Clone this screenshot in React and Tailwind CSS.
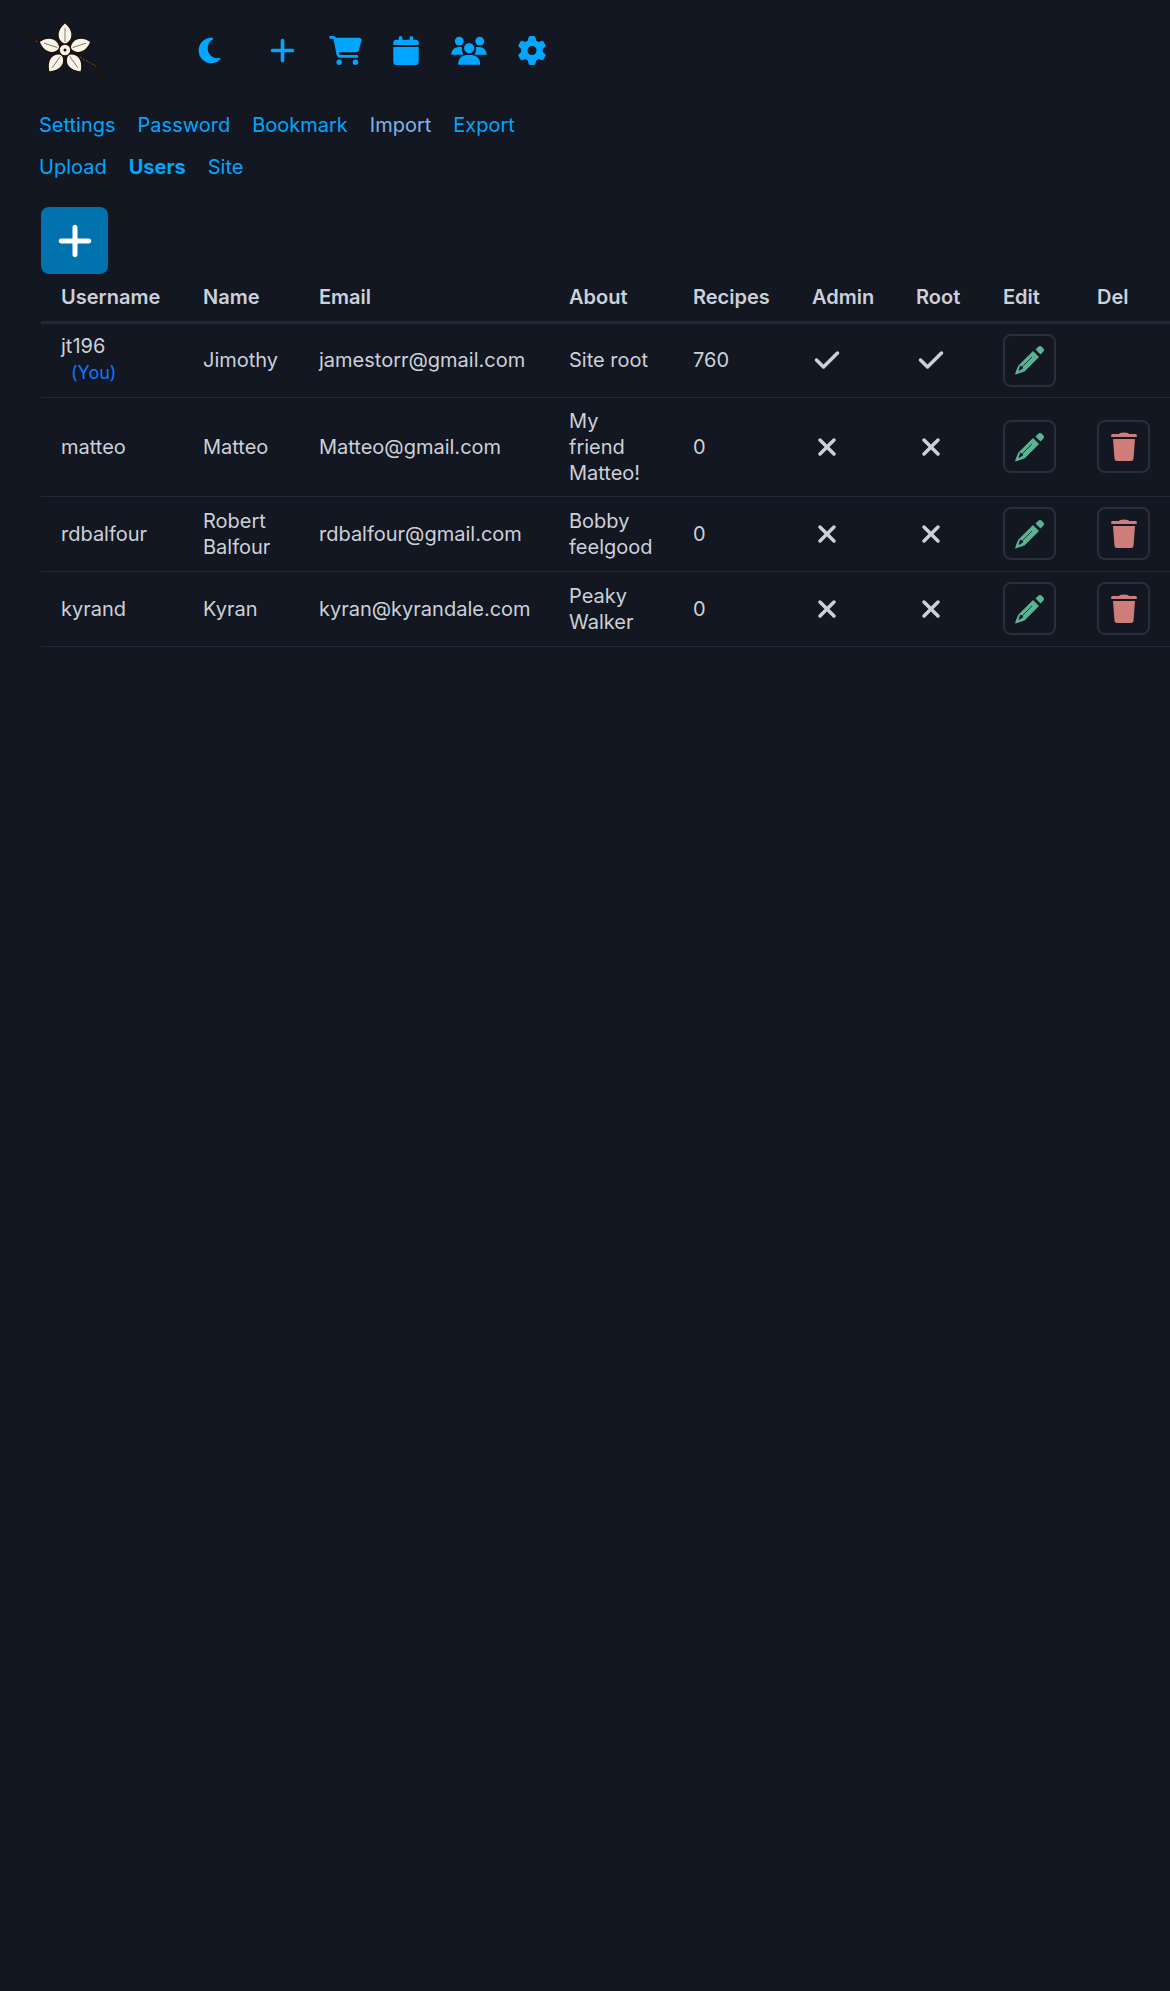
import { FaMoon, FaPlus, FaCartShopping, FaCalendar, FaGear, FaCheck, FaXmark } from 'react-icons/fa6'

const users = [
  { username: 'jt196', you: true, name: 'Jimothy', email: 'jamestorr@gmail.com', about: 'Site root', recipes: 760, admin: true, root: true, h: 'h-[75px]', canDelete: false },
  { username: 'matteo', name: 'Matteo', email: 'Matteo@gmail.com', about: 'My friend Matteo!', recipes: 0, h: 'h-[99px]', canDelete: true },
  { username: 'rdbalfour', name: 'Robert Balfour', email: 'rdbalfour@gmail.com', about: 'Bobby feelgood', recipes: 0, h: 'h-[75px]', canDelete: true },
  { username: 'kyrand', name: 'Kyran', email: 'kyran@kyrandale.com', about: 'Peaky Walker', recipes: 0, h: 'h-[75px]', canDelete: true },
]

const petals = [0, 72, 144, 216, 288]

function Logo() {
  return (
    <svg viewBox="0 0 84 64" className="w-[84px] h-[64px]">
      <path d="M3 13 C 18 24, 30 28, 44 32 C 62 38, 80 44, 81 60" fill="none" stroke="#1f140c" strokeWidth="3" />
      <path d="M14 21 L22 26 M58 37 L74 46" fill="none" stroke="#7a6a55" strokeWidth="1" strokeDasharray="1.5 2" />
      <g transform="translate(43 30)">
        {petals.map(a => (
          <g key={a} transform={`rotate(${a})`}>
            <path d="M0 -5 C -10 -10, -9 -20, 0 -27.5 C 9 -20, 10 -10, 0 -5 Z" fill="#f8f5e8" stroke="#1c120c" strokeWidth="1.5" />
            <path d="M0 -8 L0 -22" stroke="#6b6658" strokeWidth="0.8" />
          </g>
        ))}
        <circle r="6" fill="#f8f5e8" stroke="#1c120c" strokeWidth="1.5" />
        <circle r="1.5" fill="#1c120c" />
      </g>
    </svg>
  )
}

function UsersIcon() {
  return (
    <svg viewBox="0 0 109 87" fill="currentColor" className="w-[36px] h-[29px] ml-[32px]">
      <circle cx="25" cy="15" r="13.5" />
      <circle cx="87" cy="15" r="13.5" />
      <circle cx="55" cy="36" r="15.5" />
      <path d="M1 56 C1 42 11 33 23 33 L33 33 C32 43 34 50 38 56 Z" />
      <path d="M108 56 C108 42 98 33 86 33 L76 33 C77 43 75 50 71 56 Z" />
      <path d="M22 87 C20 70 33 57 47 57 L63 57 C77 57 90 70 88 87 Z" />
    </svg>
  )
}

function PencilIcon() {
  return (
    <svg viewBox="0 0 30 30" className="w-[30px] h-[30px] text-[#5cb394]" fill="currentColor">
      <path d="M20.5 4.5 L23 2 Q25 0 27 2 L28 3 Q30 5 28 7 L25.5 9.5 Z" />
      <path d="M18 6 L24 12 L9.5 26.5 Q4 28.5 0 29.5 Q1 25 3.5 20.5 Z" />
      <path d="M8 23 L4 25.5 L5.5 21 Z M7 22 L17 12" fill="#121721" stroke="#121721" strokeWidth="0.8" />
    </svg>
  )
}

function TrashIcon() {
  return (
    <svg viewBox="0 0 26 29" className="w-[26px] h-[29px] text-[#cf7d7a]" fill="currentColor">
      <path d="M9 1 Q13 0 17 1 L18 2 H25 Q26 3 26 4 L25.5 5 H0.5 L0 4 Q0 3 1 2 H8 Z" />
      <path d="M2 7 H24 L22.5 27 Q22.3 29 20 29 H6 Q3.7 29 3.5 27 Z" />
    </svg>
  )
}

function NavLink({ children, className }) {
  return <a className={`text-[#00a6ff] ${className || ''}`}>{children}</a>
}

function IconButton({ children }) {
  return (
    <button className="w-[53px] h-[53px] flex items-center justify-center rounded-lg border-2 border-[#2a2e3a]">
      {children}
    </button>
  )
}

function Flag({ on }) {
  return on
    ? <FaCheck className="text-[#cdd0d9] text-[28px] ml-px" />
    : <FaXmark className="text-[#cdd0d9] text-[28px] ml-px" />
}

export default function App() {
  return (
    <div className="min-h-[1991px] bg-[#121721] text-[#cdd0d9] text-[20px] overflow-hidden font-['Inter',sans-serif]">
      <div className="flex items-center h-[64px] mt-[20px] pl-[22px]">
        <Logo />
        <div className="flex items-center ml-[89px] -mt-[4px] text-[#00a6ff]">
          <FaMoon className="text-[29px] w-[29px]" />
          <FaPlus className="text-[29px] ml-[44px]" />
          <FaCartShopping className="text-[29px] ml-[32px] w-[33px]" />
          <FaCalendar className="text-[29px] ml-[31px] w-[26px]" />
          <UsersIcon />
          <FaGear className="text-[29px] ml-[30px] w-[30px]" />
        </div>
      </div>

      <div className="mt-[29px] pl-[39px] flex gap-[22px] leading-[24px]">
        <NavLink>Settings</NavLink>
        <NavLink>Password</NavLink>
        <NavLink>Bookmark</NavLink>
        <a className="text-[#7db5f0]">Import</a>
        <NavLink>Export</NavLink>
      </div>
      <div className="mt-[18px] pl-[39px] flex gap-[22px] leading-[24px]">
        <NavLink>Upload</NavLink>
        <NavLink className="font-bold">Users</NavLink>
        <NavLink>Site</NavLink>
      </div>

      <div className="ml-[41px] mt-[28px]">
        <button className="w-[67px] h-[67px] flex items-center justify-center rounded-lg bg-[#0072ad]">
          <FaPlus className="text-white text-[40px]" />
        </button>
        <table className="table-fixed border-collapse w-[1129px]">
          <colgroup>
            <col className="w-[142px]" />
            <col className="w-[116px]" />
            <col className="w-[250px]" />
            <col className="w-[124px]" />
            <col className="w-[119px]" />
            <col className="w-[104px]" />
            <col className="w-[87px]" />
            <col className="w-[94px]" />
            <col className="w-[93px]" />
          </colgroup>
          <thead>
            <tr className="h-[48px] border-b-[3px] border-[#232733]">
              {['Username', 'Name', 'Email', 'About', 'Recipes', 'Admin', 'Root', 'Edit', 'Del'].map(h => (
                <th key={h} className="text-left font-semibold pl-[20px] whitespace-nowrap">{h}</th>
              ))}
            </tr>
          </thead>
          <tbody>
            {users.map(u => (
              <tr key={u.username} className={`${u.h} border-b border-[#232733]`}>
                <td className="pl-[20px] leading-[26px]">
                  {u.username}
                  {u.you && <div className="pl-[10px] text-[18px] text-[#0a7aff] leading-[28px]">(You)</div>}
                </td>
                <td className="pl-[20px] pr-[20px] leading-[26px]">{u.name}</td>
                <td className="pl-[20px] whitespace-nowrap">{u.email}</td>
                <td className="pl-[20px] pr-[20px] leading-[26px]">{u.about}</td>
                <td className="pl-[20px]">{u.recipes}</td>
                <td className="pl-[20px]"><Flag on={u.admin} /></td>
                <td className="pl-[20px]"><Flag on={u.root} /></td>
                <td className="pl-[20px]">
                  <IconButton><PencilIcon /></IconButton>
                </td>
                <td className="pl-[20px]">
                  {u.canDelete && <IconButton><TrashIcon /></IconButton>}
                </td>
              </tr>
            ))}
          </tbody>
        </table>
      </div>
    </div>
  )
}
